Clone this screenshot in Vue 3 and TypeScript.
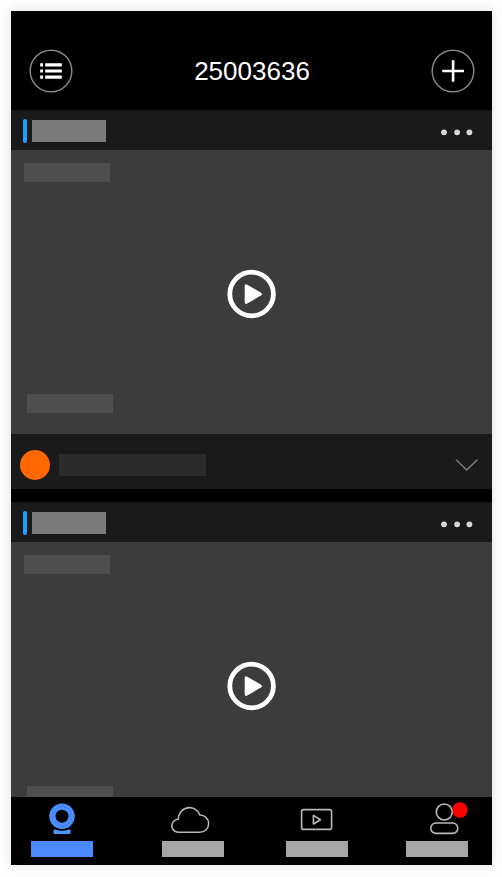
<script setup lang="ts">
interface Camera {
  id: number
}

interface Tab {
  id: 'camera' | 'cloud' | 'video' | 'profile'
  label: string
}

const title = '25003636'
const cameras: Camera[] = [{ id: 1 }, { id: 2 }]
const tabs: Tab[] = [
  { id: 'camera', label: 'Cameras' },
  { id: 'cloud', label: 'Cloud' },
  { id: 'video', label: 'Videos' },
  { id: 'profile', label: 'Profile' },
]
</script>

<template>
  <div class="page">
    <div class="phone">
      <header class="top">
        <button class="round" type="button" aria-label="Menu">
          <svg class="round-icon" viewBox="0 0 44 44" aria-hidden="true">
            <circle class="ring" cx="22" cy="22" r="20.8" />
            <path class="list-line" d="M16.2 15.9h16.6M16.2 22h16.6M16.2 28.2h16.6" />
            <path class="list-line" d="M11.2 15.9h2.8M11.2 22h2.8M11.2 28.2h2.8" />
          </svg>
        </button>
        <h1 class="title">{{ title }}</h1>
        <button class="round" type="button" aria-label="Add">
          <svg class="round-icon" viewBox="0 0 44 44" aria-hidden="true">
            <circle class="ring" cx="22" cy="22" r="20.8" />
            <path class="plus" d="M11.2 22h21.800M22.100 11.200v21.600" />
          </svg>
        </button>
      </header>

      <main class="feed">
        <article v-for="camera in cameras" :key="camera.id" class="card">
          <div class="card-head">
            <span class="accent"></span>
            <span class="name"></span>
            <button class="more" type="button" aria-label="More">
              <svg width="32" height="10" viewBox="0 0 32 10" aria-hidden="true">
                <circle cx="3" cy="6.3" r="2.9" />
                <circle cx="16.1" cy="6.3" r="2.9" />
                <circle cx="28.4" cy="6.3" r="2.9" />
              </svg>
            </button>
          </div>
          <div class="preview">
            <span class="chip chip-top"></span>
            <button class="play" type="button" aria-label="Play">
              <svg width="50" height="50" viewBox="0 0 50 50" aria-hidden="true">
                <circle class="play-ring" cx="24.6" cy="25" r="21.8" />
                <path class="play-mark" d="M19.1 16.6v17L33.600 25.100z" />
              </svg>
            </button>
            <span class="chip chip-bottom"></span>
          </div>
          <div class="card-foot">
            <span class="dot"></span>
            <span class="message"></span>
            <button class="expand" type="button" aria-label="Expand">
              <svg width="24" height="14" viewBox="0 0 24 14" aria-hidden="true">
                <path d="M1.4 2L11.700 12 22 2" />
              </svg>
            </button>
          </div>
        </article>
      </main>

      <nav class="tabs">
        <button
          v-for="tab in tabs"
          :key="tab.id"
          class="tab"
          :class="{ active: tab.id === 'camera' }"
          type="button"
          :aria-label="tab.label"
        >
          <svg class="tab-icon" width="62" height="36" viewBox="0 0 62 36" aria-hidden="true">
            <g v-if="tab.id === 'camera'">
              <circle class="lens" cx="31" cy="15.2" r="9.6" />
              <circle class="lens-edge" cx="31" cy="15.2" r="9.6" />
              <path
                class="stand"
                d="M24.2 28.600c4.200 1.600 9.400 1.600 13.600 0c2-.4 2.400 1.200 1.600 2.400c.6 1.200 0 2-1.200 2H23.800c-1.200 0-1.800-.8-1.200-2c-.8-1.200-.4-2.800 1.600-2.400z"
              />
            </g>
            <path
              v-else-if="tab.id === 'cloud'"
              class="line"
              d="M16.4 31.300A6.500 6.500 0 0 1 16.300 18.300A11.200 11.200 0 0 1 38 14A8.600 8.600 0 0 1 38 31.300z"
            />
            <g v-else-if="tab.id === 'video'">
              <rect class="line" x="15.6" y="8.6" width="30" height="19.8" rx="2" />
              <path class="line" d="M27.4 14.400v8.600L34.400 18.700z" />
            </g>
            <g v-else>
              <circle class="line" cx="38.3" cy="11" r="8" />
              <rect class="line" x="24.8" y="22" width="27" height="10.4" rx="5.2" />
              <circle class="badge" cx="54" cy="9" r="7.7" />
            </g>
          </svg>
          <span class="tab-label"></span>
        </button>
      </nav>
    </div>
  </div>
</template>

<style>
body {
  background: #fefefe;
}
</style>

<style scoped>
.page {
  box-sizing: border-box;
  height: 100vh;
  padding: 11px 10px 12px 11px;
  font-family: "Liberation Sans", Arial, sans-serif;
}

.phone {
  display: flex;
  flex-direction: column;
  height: 100%;
  background: #000;
  box-shadow: 0 0 11px rgba(0, 0, 0, 0.12);
}

button {
  display: block;
  flex: none;
  margin: 0;
  padding: 0;
  border: 0;
  background: none;
  cursor: pointer;
}

svg {
  display: block;
  fill: none;
  stroke-linecap: round;
  stroke-linejoin: round;
}

.top {
  display: flex;
  flex: none;
  align-items: center;
  justify-content: space-between;
  padding: 38px 17px 17px 18px;
}

.round,
.round-icon {
  width: 44px;
  height: 44px;
}

.ring {
  stroke: #858585;
  stroke-width: 1.5;
}

.list-line {
  stroke: #fff;
  stroke-width: 3.2;
  stroke-linecap: butt;
}

.plus {
  stroke: #fff;
  stroke-width: 2.6;
  stroke-linecap: butt;
}

.title {
  margin: 0;
  color: #fff;
  font-size: 26px;
  font-weight: 400;
  line-height: 44px;
}

.feed {
  flex: 1;
  min-height: 0;
  overflow-y: auto;
  scrollbar-width: none;
}

.card {
  margin-bottom: 13px;
  background: #1a1a1a;
}

.card-head {
  display: flex;
  align-items: center;
  height: 40px;
  padding: 0 19px 0 12px;
}

.accent,
.name,
.more {
  margin-top: 2px;
}

.accent {
  width: 4px;
  height: 24px;
  margin-right: 5px;
  border-radius: 2px;
  background: #1e9fff;
}

.name {
  width: 74px;
  height: 22px;
  background: #7b7b7b;
}

.more,
.expand {
  margin-left: auto;
}

.more circle {
  fill: #d8d8d8;
}

.preview {
  padding: 13px 0 21px;
  background: #3c3c3c;
}

.chip {
  display: block;
  width: 86px;
  height: 19px;
  background: #4f4f4f;
}

.chip-top {
  margin-left: 13px;
}

.chip-bottom {
  margin-left: 16px;
}

.play {
  margin: 87px auto 75px;
}

.play-ring {
  stroke: #fff;
  stroke-width: 4.8;
}

.play-mark {
  fill: #fff;
  stroke: #fff;
  stroke-width: 2.8;
}

.card-foot {
  display: flex;
  align-items: center;
  padding: 16px 13px 9px 9px;
}

.dot {
  width: 30px;
  height: 30px;
  border-radius: 50%;
  background: #ff6700;
}

.message {
  width: 147px;
  height: 22px;
  margin-left: 9px;
  background: #2b2b2b;
}

.expand path {
  stroke: #7c7c7c;
  stroke-width: 1.5;
}

.tabs {
  display: grid;
  flex: none;
  grid-template-columns: 131fr 124fr 120fr 62fr;
  justify-items: start;
  padding: 4px 24px 8px 20px;
  background: #000;
}

.tab-icon {
  margin-bottom: 4px;
}

.tab-label {
  display: block;
  height: 16px;
  background: #a6a6a6;
}

.active .tab-label {
  background: #4c8bff;
}

.lens {
  stroke: #4c8fff;
  stroke-width: 6.2;
}

.lens-edge {
  stroke: #4584f0;
  stroke-width: 1.4;
}

.stand {
  fill: #4c94ff;
}

.line {
  stroke: #b8b8b8;
  stroke-width: 1.6;
}

.badge {
  fill: #f00;
}
</style>
